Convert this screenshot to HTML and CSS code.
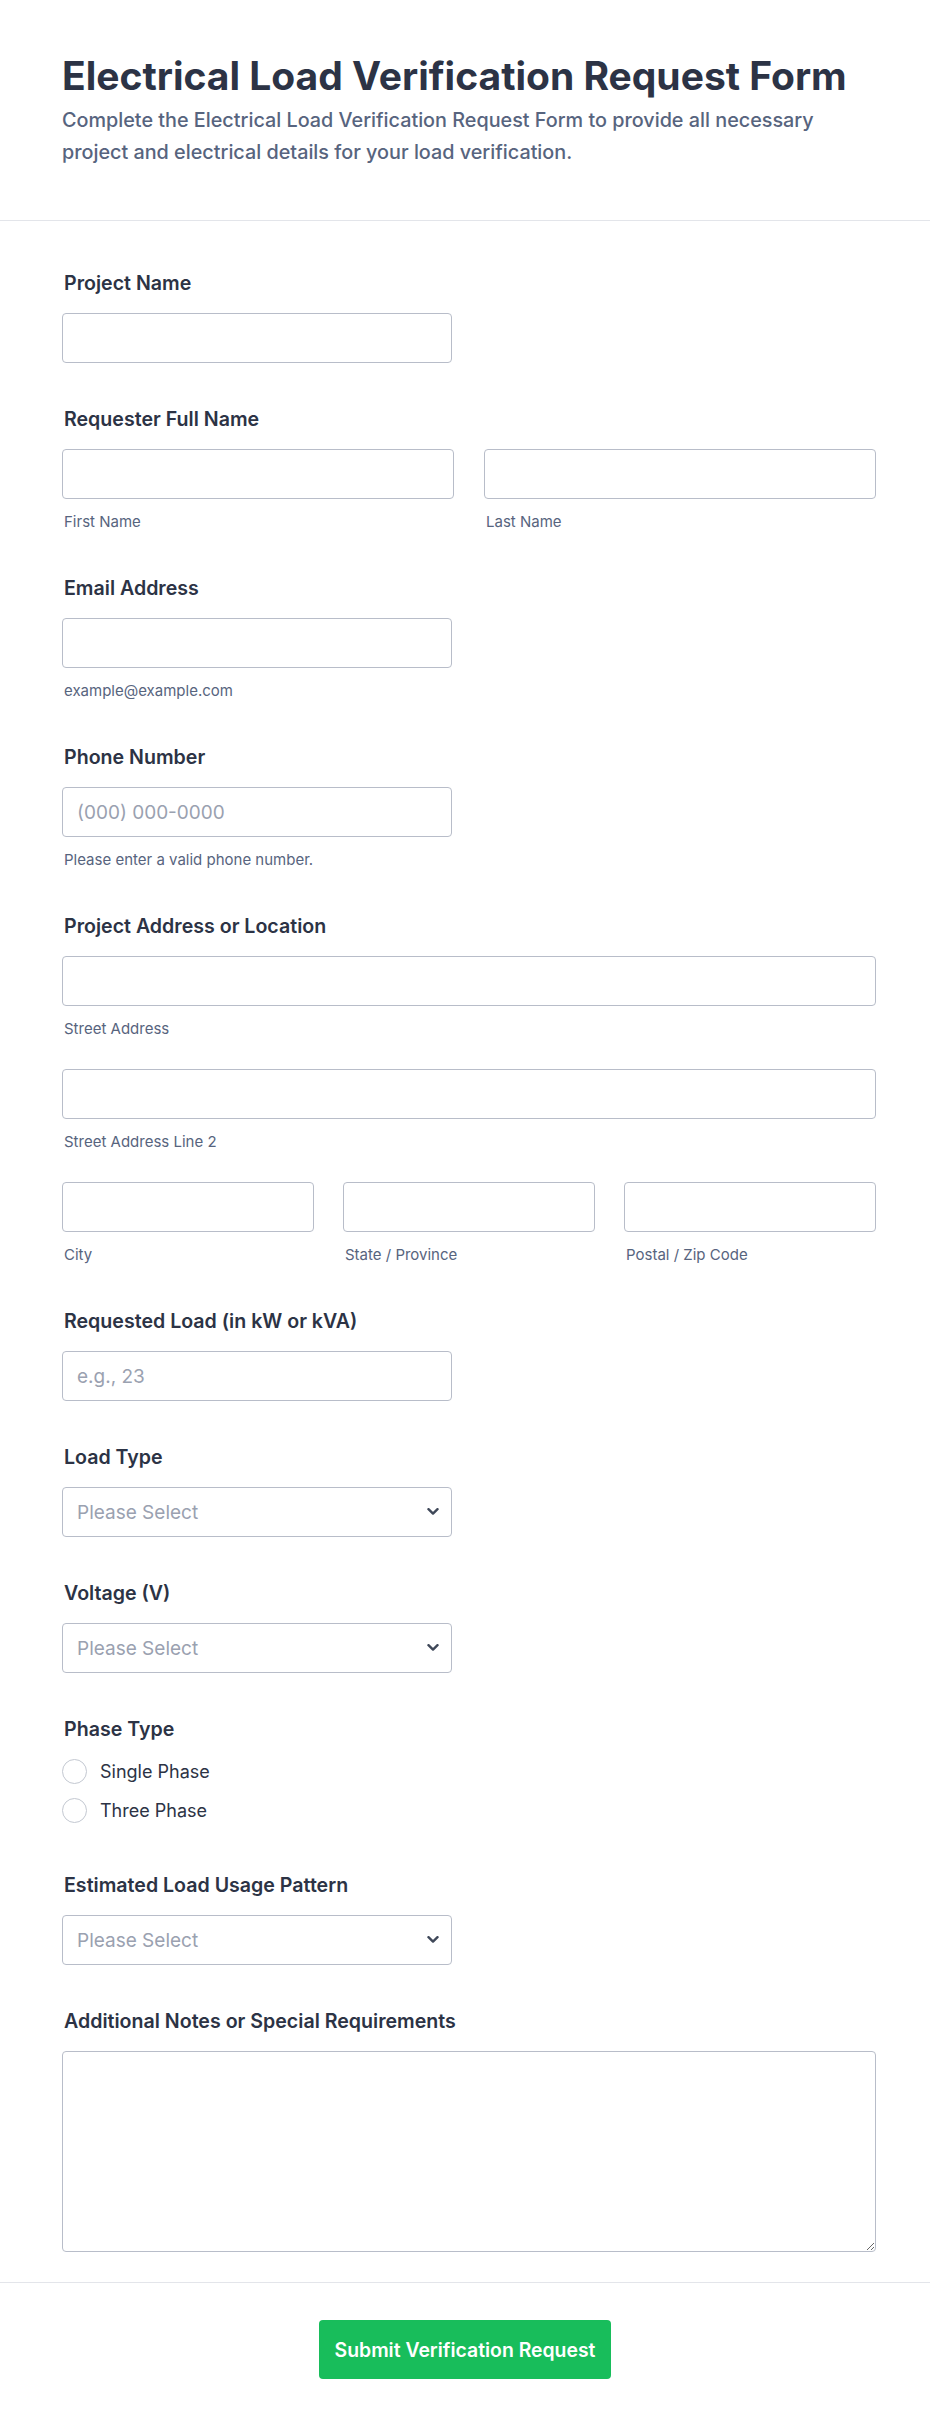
FILE: index.html
```html
<!DOCTYPE html>
<html lang="en">
<head>
    <meta charset="UTF-8" />
    <meta name="viewport" content="width=device-width, initial-scale=1.0"/>
    <title>Electrical Load Verification Request Form</title>
    <link rel="stylesheet" href="styles.css">
</head>
<body>
<form class="form" onsubmit="return false;">
    <header class="form-header">
        <h1>Electrical Load Verification Request Form</h1>
        <p>Complete the Electrical Load Verification Request Form to provide all necessary project and electrical details for your load verification.</p>
    </header>

    <div class="form-body">
        <div class="field">
            <label class="field-label" for="project">Project Name</label>
            <input class="half" type="text" id="project" />
        </div>

        <div class="field">
            <label class="field-label" for="first">Requester Full Name</label>
            <div class="row two">
                <div>
                    <input type="text" id="first" />
                    <span class="sublabel">First Name</span>
                </div>
                <div>
                    <input type="text" id="last" />
                    <span class="sublabel">Last Name</span>
                </div>
            </div>
        </div>

        <div class="field">
            <label class="field-label" for="email">Email Address</label>
            <input class="half" type="email" id="email" />
            <span class="sublabel">example@example.com</span>
        </div>

        <div class="field">
            <label class="field-label" for="phone">Phone Number</label>
            <input class="half" type="tel" id="phone" placeholder="(000) 000-0000" />
            <span class="sublabel">Please enter a valid phone number.</span>
        </div>

        <div class="field">
            <label class="field-label" for="street">Project Address or Location</label>
            <div class="stack">
                <div>
                    <input type="text" id="street" />
                    <span class="sublabel">Street Address</span>
                </div>
                <div>
                    <input type="text" id="street2" />
                    <span class="sublabel">Street Address Line 2</span>
                </div>
                <div class="row three">
                    <div>
                        <input type="text" id="city" />
                        <span class="sublabel">City</span>
                    </div>
                    <div>
                        <input type="text" id="state" />
                        <span class="sublabel">State / Province</span>
                    </div>
                    <div>
                        <input type="text" id="zip" />
                        <span class="sublabel">Postal / Zip Code</span>
                    </div>
                </div>
            </div>
        </div>

        <div class="field">
            <label class="field-label" for="load">Requested Load (in kW or kVA)</label>
            <input class="half" type="text" id="load" placeholder="e.g., 23" />
        </div>

        <div class="field">
            <label class="field-label" for="loadType">Load Type</label>
            <div class="select-wrap half">
                <select id="loadType">
                    <option>Please Select</option>
                    <option>Residential</option>
                    <option>Commercial</option>
                    <option>Industrial</option>
                </select>
                <svg class="chevron" viewBox="0 0 12 7" width="12" height="7"><polyline points="1.5,1.2 6,5.6 10.5,1.2" /></svg>
            </div>
        </div>

        <div class="field">
            <label class="field-label" for="voltage">Voltage (V)</label>
            <div class="select-wrap half">
                <select id="voltage">
                    <option>Please Select</option>
                    <option>120/240</option>
                    <option>208</option>
                    <option>480</option>
                </select>
                <svg class="chevron" viewBox="0 0 12 7" width="12" height="7"><polyline points="1.5,1.2 6,5.6 10.5,1.2" /></svg>
            </div>
        </div>

        <div class="field">
            <span class="field-label">Phase Type</span>
            <div class="radios">
                <label class="radio"><input type="radio" name="phase" /> Single Phase</label>
                <label class="radio"><input type="radio" name="phase" /> Three Phase</label>
            </div>
        </div>

        <div class="field">
            <label class="field-label" for="usage">Estimated Load Usage Pattern</label>
            <div class="select-wrap half">
                <select id="usage">
                    <option>Please Select</option>
                    <option>Continuous</option>
                    <option>Intermittent</option>
                    <option>Peak Only</option>
                </select>
                <svg class="chevron" viewBox="0 0 12 7" width="12" height="7"><polyline points="1.5,1.2 6,5.6 10.5,1.2" /></svg>
            </div>
        </div>

        <div class="field">
            <label class="field-label" for="notes">Additional Notes or Special Requirements</label>
            <textarea id="notes"></textarea>
        </div>
    </div>

    <footer class="form-footer">
        <button type="submit">Submit Verification Request</button>
    </footer>
</form>
</body>
</html>
```

FILE: styles.css
```css
* {
  box-sizing: border-box;
}

body {
  margin: 0;
  background: #fff;
  font-family: Inter, "Noto Sans", sans-serif;
  color: #2c3345;
}

.form-header {
  padding: 52px 62px 52px;
  border-bottom: 1px solid #e3e5ea;
}

.form-header h1 {
  margin: 0;
  font-size: 39px;
  line-height: 48px;
  font-weight: 700;
  color: #2c3345;
}

.form-header p {
  margin: 4px 0 0;
  font-size: 19.8px;
  line-height: 32px;
  font-weight: 500;
  color: #57647e;
}

.form-body {
  padding: 50px 54px 30px 62px;
}

.field {
  margin-bottom: 44px;
}

.field:last-child {
  margin-bottom: 0;
}

.field-label {
  display: block;
  padding-left: 2px;
  font-size: 19.6px;
  line-height: 24px;
  font-weight: 600;
  margin-bottom: 18px;
}

input[type="text"],
input[type="email"],
input[type="tel"],
select,
textarea {
  display: block;
  width: 100%;
  height: 50px;
  padding: 0 14px;
  border: 1px solid #b8bdc9;
  border-radius: 4px;
  background: #fff;
  font-family: inherit;
  font-size: 19px;
  color: #2c3345;
}

input::placeholder {
  color: #9aa1b0;
}

.half {
  width: 390px !important;
}

.sublabel {
  display: block;
  margin-top: 13px;
  padding-left: 2px;
  font-size: 15px;
  line-height: 20px;
  color: #57647e;
}

.row {
  display: grid;
  gap: 30px;
}

.row.two {
  grid-template-columns: 1fr 1fr;
}

.row.three {
  grid-template-columns: 1fr 1fr 1fr;
  gap: 29px;
}

.stack {
  display: flex;
  flex-direction: column;
  gap: 30px;
}

.select-wrap {
  position: relative;
}

select {
  appearance: none;
  color: #9aa1b0;
}

.chevron {
  position: absolute;
  right: 13px;
  top: 21px;
  fill: none;
  stroke: #3f4859;
  stroke-width: 2.4;
  stroke-linecap: round;
  stroke-linejoin: round;
  pointer-events: none;
}

.radios {
  display: flex;
  flex-direction: column;
  gap: 14px;
}

.radio {
  display: flex;
  align-items: center;
  gap: 13px;
  font-size: 18px;
  line-height: 25px;
  color: #2c3345;
}

.radio input {
  appearance: none;
  margin: 0;
  width: 25px;
  height: 25px;
  border: 1px solid #c3c8d1;
  border-radius: 50%;
  background: #fff;
}

.field:has(.radios) {
  margin-bottom: 50px;
}

textarea {
  height: 201px;
  padding: 12px 14px;
  resize: both;
}

.form-footer {
  border-top: 1px solid #e3e5ea;
  padding: 37px 0 50px;
  text-align: center;
}

.form-footer button {
  height: 59px;
  padding: 0 16px;
  border: none;
  border-radius: 4px;
  background: #18bd5b;
  color: #fff;
  font-family: inherit;
  font-size: 19.4px;
  font-weight: 600;
  cursor: pointer;
}
```
